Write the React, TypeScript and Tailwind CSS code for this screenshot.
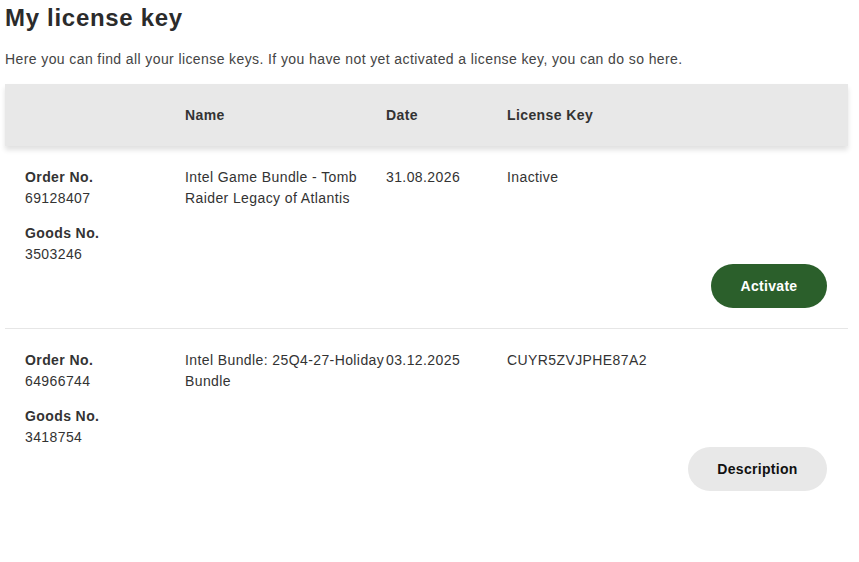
export default function App() {
  const rows = [
    {
      order: "69128407",
      goods: "3503246",
      name: "Intel Game Bundle - Tomb Raider Legacy of Atlantis",
      date: "31.08.2026",
      key: "Inactive",
      button: "activate",
    },
    {
      order: "64966744",
      goods: "3418754",
      name: "Intel Bundle: 25Q4-27-Holiday Bundle",
      date: "03.12.2025",
      key: "CUYR5ZVJPHE87A2",
      button: "description",
    },
  ];
  return (
    <div
      className="w-[859px] h-[562px] bg-white text-[#333333] overflow-hidden"
      style={{ fontFamily: '"Liberation Sans", Arial, sans-serif' }}
    >
      <div className="pl-[5px] w-[848px]">
        <h1 className="text-[24px] font-bold leading-[36px] tracking-[0.7px] text-[#2b2b2b]">My license key</h1>
        <p className="text-[14px] leading-[20px] mt-[13px] tracking-[0.4px] text-[#444]">
          Here you can find all your license keys. If you have not yet activated a license key, you can do so here.
        </p>
        <div className="mt-[15px] h-[62px] bg-[#e8e8e8] shadow-[0_4px_5px_rgba(0,0,0,0.12)] grid grid-cols-[180px_201px_121px_1fr] items-center text-[14px] font-bold tracking-[0.4px]">
          <div />
          <div>Name</div>
          <div>Date</div>
          <div>License Key</div>
        </div>
        {rows.map((r, i) => (
          <div key={i} className={`pt-[21px] pb-[20px] ${i === 0 ? "border-b border-[#e6e6e6]" : ""}`}>
            <div className="grid grid-cols-[180px_201px_121px_1fr] text-[14px] leading-[21px] tracking-[0.4px]">
              <div className="pl-5">
                <div className="font-bold">Order No.</div>
                <div>{r.order}</div>
                <div className="font-bold mt-[14px]">Goods No.</div>
                <div>{r.goods}</div>
              </div>
              <div>{r.name}</div>
              <div>{r.date}</div>
              <div>{r.key}</div>
            </div>
            <div className="flex justify-end pr-[21px] -mt-px">
              {r.button === "activate" ? (
                <button className="w-[116px] h-[44px] rounded-full bg-[#2b5f2b] text-white text-[14px] font-bold tracking-[0.3px]">
                  Activate
                </button>
              ) : (
                <button className="w-[139px] h-[44px] rounded-full bg-[#e8e8e8] text-[#111] text-[14px] font-bold tracking-[0.3px]">
                  Description
                </button>
              )}
            </div>
          </div>
        ))}
      </div>
    </div>
  );
}
